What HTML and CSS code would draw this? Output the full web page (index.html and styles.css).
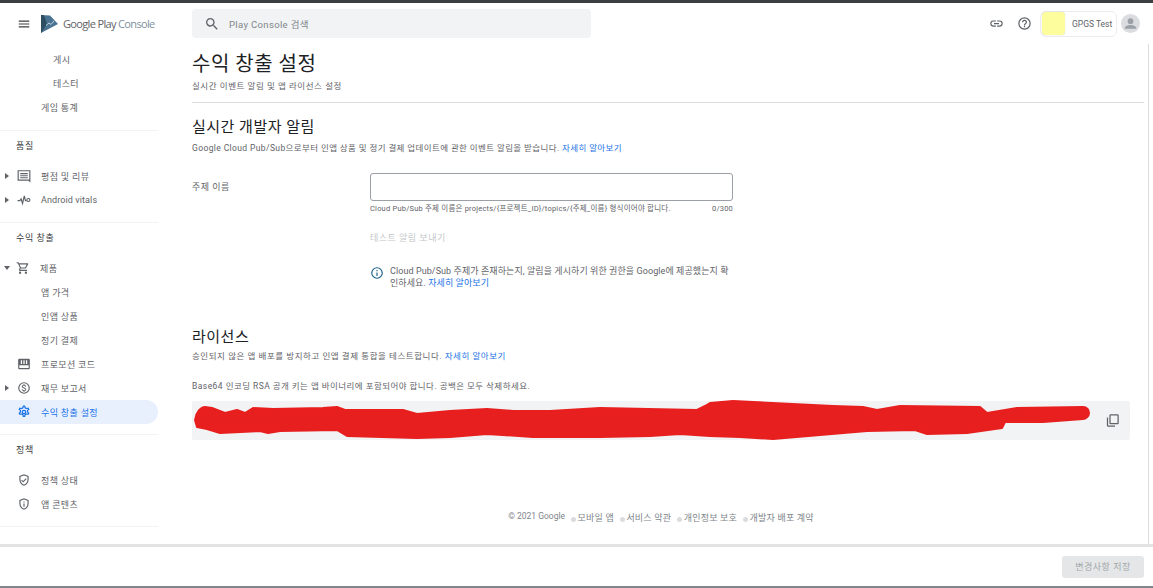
FILE: index.html
```html
<!DOCTYPE html>
<html lang="ko">
<head>
<meta charset="utf-8">
<title>수익 창출 설정</title>
<link rel="stylesheet" href="styles.css">
</head>
<body>
<div class="window">
  <aside class="sidebar">
    <div class="brand">
      <svg class="menu-icon" viewBox="0 0 24 24"><path d="M3 18h18v-2H3v2zm0-5h18v-2H3v2zm0-7v2h18V6H3z"/></svg>
      <svg class="logo" viewBox="0 0 17 18"><path d="M0 0l9 .6 8 8.400L0 18z" fill="#4a7391"/><path d="M0 0l3 .2L6 9 0 18z" fill="#2d4d63"/><path d="M5 10.500l3-2.500 2 1.500 3-3.500" fill="none" stroke="#bcd4e2" stroke-width="1"/></svg>
      <span class="brand-name">Google Play <span class="brand-light">Console</span></span>
    </div>
    <nav class="nav">
      <section class="nav-group first">
        <a class="row sub deep">게시</a>
        <a class="row sub deep">테스터</a>
        <a class="row sub">게임 통계</a>
      </section>
      <section class="nav-group">
        <h3 class="nav-title">품질</h3>
        <a class="row"><i class="caret"></i><svg class="nav-icon" viewBox="0 0 24 24"><path d="M23 2H1v18h18.500L23 23V2zm-2 16.200l-.7-.2H3V4h18v14.200zM5.500 7h13v1.800h-13zm0 3.600h13v1.800h-13zm0 3.600h13V16h-13z"/></svg>평점 및 리뷰</a>
        <a class="row latin"><i class="caret"></i><svg class="nav-icon" viewBox="0 0 24 24"><path d="M1 13h4l2-3 2.500 8 3-13 2 8h2" fill="none" stroke="currentColor" stroke-width="2"/><circle cx="19.500" cy="12" r="2.600" fill="none" stroke="currentColor" stroke-width="2"/></svg>Android vitals</a>
      </section>
      <section class="nav-group">
        <h3 class="nav-title">수익 창출</h3>
        <a class="row"><i class="caret open"></i><svg class="nav-icon" viewBox="0 0 24 24"><path d="M15.550 13c.75 0 1.410-.41 1.750-1.030l3.580-6.490A1 1 0 0 0 20.010 4H5.210l-.94-2H1v2h2l3.600 7.590-1.350 2.440C4.520 15.370 5.480 17 7 17h12v-2H7l1.100-2h7.450zM6.160 6h12.150l-2.760 5H8.530L6.160 6zM7 18a2 2 0 1 0 0 4 2 2 0 0 0 0-4zm10 0a2 2 0 1 0 0 4 2 2 0 0 0 0-4z"/></svg>제품</a>
        <a class="row sub">앱 가격</a>
        <a class="row sub">인앱 상품</a>
        <a class="row sub">정기 결제</a>
        <a class="row"><i class="caret none"></i><svg class="nav-icon" viewBox="0 0 24 24"><path d="M4 3h16a2 2 0 0 1 2 2v14a2 2 0 0 1-2 2H4a2 2 0 0 1-2-2V5a2 2 0 0 1 2-2zM4 14v5h16v-5z"/><path fill="#fff" d="M6.500 5.500h2.200V12H6.500zm4.400 0h2.200V12h-2.200zm4.400 0h2.200V12h-2.200z"/></svg>프로모션 코드</a>
        <a class="row"><i class="caret"></i><svg class="nav-icon" viewBox="0 0 24 24"><path d="M12 2a10 10 0 1 0 0 20 10 10 0 0 0 0-20zm0 18a8 8 0 1 1 0-16 8 8 0 0 1 0 16zm.3-8.900c-1.700-.44-2.300-.9-2.300-1.600 0-.8.760-1.400 2-1.400 1.300 0 1.800.63 1.850 1.550h1.650c-.05-1.260-.82-2.420-2.350-2.790V5.500h-2.200v1.340C9.500 7.140 8.300 8.060 8.300 9.520c0 1.750 1.450 2.620 3.550 3.130 1.900.45 2.250 1.110 2.250 1.810 0 .52-.37 1.350-2.050 1.350-1.560 0-2.170-.7-2.250-1.600H8.150c.09 1.660 1.330 2.590 2.800 2.900v1.390h2.200v-1.370c1.430-.27 2.560-1.090 2.560-2.590 0-2.070-1.780-2.780-3.410-3.440z"/></svg>재무 보고서</a>
        <a class="row active"><i class="caret none"></i><svg class="nav-icon" viewBox="0 0 24 24"><path fill-rule="evenodd" d="M10 1h4l.6 3a8 8 0 0 1 2 1.150l2.900-1 2 3.450-2.300 2a8 8 0 0 1 0 2.300l2.300 2-2 3.450-2.900-1a8 8 0 0 1-2 1.150l-.6 3h-4l-.6-3a8 8 0 0 1-2-1.150l-2.900 1-2-3.450 2.300-2a8 8 0 0 1 0-2.300l-2.300-2 2-3.450 2.900 1a8 8 0 0 1 2-1.150zm1.600 2l-.5 2.500a6 6 0 0 0-3.100 1.800L5.600 6.500l-.4.700 1.900 1.700a6 6 0 0 0 0 3.600l-1.900 1.700.4.700 2.400-.8a6 6 0 0 0 3.100 1.800l.5 2.500h.8l.5-2.500a6 6 0 0 0 3.100-1.800l2.400.8.4-.7-1.900-1.700a6 6 0 0 0 0-3.600l1.900-1.700-.4-.7-2.400.8a6 6 0 0 0-3.100-1.800L12.400 3zM12 8a4 4 0 1 1 0 8 4 4 0 0 1 0-8zm0 2.200a1.800 1.800 0 1 0 0 3.600 1.800 1.800 0 0 0 0-3.600z"/></svg>수익 창출 설정</a>
      </section>
      <section class="nav-group">
        <h3 class="nav-title">정책</h3>
        <a class="row"><i class="caret none"></i><svg class="nav-icon" viewBox="0 0 24 24"><path d="M12 2L4 5v6c0 5 3.400 9.700 8 11 4.600-1.300 8-6 8-11V5l-8-3zm6 9c0 4-2.600 7.700-6 8.900-3.400-1.200-6-4.900-6-8.900V6.400l6-2.300 6 2.300V11zm-9.500.500L7.100 12.900l3.400 3.400 6-6-1.400-1.400-4.600 4.600-2-2z"/></svg>정책 상태</a>
        <a class="row"><i class="caret none"></i><svg class="nav-icon" viewBox="0 0 24 24"><path d="M12 2L4 5v6c0 5 3.400 9.700 8 11 4.600-1.300 8-6 8-11V5l-8-3zm6 9c0 4-2.600 7.700-6 8.900-3.400-1.200-6-4.900-6-8.900V6.400l6-2.300 6 2.300V11zM11 7.500h2v2h-2zm0 3.500h2v5.500h-2z"/></svg>앱 콘텐츠</a>
      </section>
    </nav>
  </aside>

  <div class="content">
    <header class="topbar">
      <div class="search">
        <svg class="search-icon" viewBox="0 0 24 24"><path d="M15.500 14h-.79l-.28-.27A6.470 6.470 0 0 0 16 9.500 6.500 6.500 0 1 0 9.500 16c1.610 0 3.090-.59 4.230-1.570l.27.28v.79l5 4.990L20.490 19l-4.990-5zm-6 0C7.010 14 5 11.990 5 9.500S7.010 5 9.500 5 14 7.010 14 9.500 11.990 14 9.500 14z"/></svg>
        <span>Play Console 검색</span>
      </div>
      <div class="top-actions">
        <svg class="top-icon" viewBox="0 0 24 24"><path d="M3.900 12c0-1.710 1.390-3.100 3.100-3.100h4V7H7a5 5 0 0 0 0 10h4v-1.900H7c-1.710 0-3.100-1.390-3.100-3.100zM8 13h8v-2H8v2zm9-6h-4v1.900h4c1.710 0 3.100 1.390 3.100 3.100s-1.390 3.100-3.100 3.100h-4V17h4a5 5 0 0 0 0-10z"/></svg>
        <svg class="top-icon" viewBox="0 0 24 24"><path d="M11 18h2v-2h-2v2zm1-16a10 10 0 1 0 0 20 10 10 0 0 0 0-20zm0 18a8 8 0 1 1 0-16 8 8 0 0 1 0 16zm0-14a4 4 0 0 0-4 4h2c0-1.100.9-2 2-2s2 .9 2 2c0 2-3 1.750-3 5h2c0-2.250 3-2.500 3-5a4 4 0 0 0-4-4z"/></svg>
        <div class="account"><span class="swatch"></span><span>GPGS Test</span></div>
        <svg class="avatar" viewBox="0 0 20 20"><circle cx="10" cy="10" r="10" fill="#dadce0"/><circle cx="10" cy="7.500" r="3" fill="#9aa0a6"/><path d="M4 15c0-2.500 3.500-3.500 6-3.500s6 1 6 3.500v.500H4z" fill="#9aa0a6"/></svg>
      </div>
    </header>

    <main class="main">
      <div class="page-head">
        <h1>수익 창출 설정</h1>
        <p class="muted">실시간 이벤트 알림 및 앱 라이선스 설정</p>
      </div>

      <section class="block rtdn">
        <h2>실시간 개발자 알림</h2>
        <p class="muted">Google Cloud Pub/Sub으로부터 인앱 상품 및 정기 결제 업데이트에 관한 이벤트 알림을 받습니다. <a class="link">자세히 알아보기</a></p>
        <div class="field">
          <label>주제 이름</label>
          <div class="field-body">
            <div class="input"></div>
            <div class="hint"><span>Cloud Pub/Sub 주제 이름은 projects/{프로젝트_ID}/topics/{주제_이름} 형식이어야 합니다.</span><span>0/300</span></div>
            <div class="test-btn">테스트 알림 보내기</div>
            <div class="notice">
              <svg class="info" viewBox="0 0 24 24"><path d="M11 7h2v2h-2zm0 4h2v6h-2zm1-9a10 10 0 1 0 0 20 10 10 0 0 0 0-20zm0 18a8 8 0 1 1 0-16 8 8 0 0 1 0 16z"/></svg>
              <p>Cloud Pub/Sub 주제가 존재하는지, 알림을 게시하기 위한 권한을 Google에 제공했는지 확인하세요. <a class="link">자세히 알아보기</a></p>
            </div>
          </div>
        </div>
      </section>

      <section class="block license">
        <h2>라이선스</h2>
        <p class="muted">승인되지 않은 앱 배포를 방지하고 인앱 결제 통합을 테스트합니다. <a class="link">자세히 알아보기</a></p>
        <p class="muted key-label">Base64 인코딩 RSA 공개 키는 앱 바이너리에 포함되어야 합니다. 공백은 모두 삭제하세요.</p>
        <div class="key-box">
          <svg class="scribble" viewBox="192 398 900 44"><path fill="#e81f1f" stroke="#e81f1f" stroke-width="2" stroke-linejoin="round" d="M195 420C196 412 201 407 205 407L212 408 225 413 237 410 245 413 253 408 273 409 323 408 337 407 345 410 403 410 417 414 450 411 487 409 513 411 550 411 600 408 697 410 705 406 710 403 733 401 833 406 863 407 877 410 900 406 980 407 987 413 1017 408 1083 407C1087 407 1089 410 1089 413 1089 416 1086 419 1083 419L1043 422 1005 422 1002 428 967 433 927 434 915 430 867 431 773 439 740 437 710 436 680 434 650 436 600 437 533 437 487 434 450 437 417 438 347 436 337 430 280 431 268 433 260 431 220 433 207 429 197 427Z"/></svg>
          <svg class="copy" viewBox="0 0 24 24"><path d="M9 2h11a2 2 0 0 1 2 2v12a2 2 0 0 1-2 2H9a2 2 0 0 1-2-2V4a2 2 0 0 1 2-2zm0 2v12h11V4H9zM3 7h2v13h11v2H5a2 2 0 0 1-2-2V7z"/></svg>
        </div>
      </section>

      <footer class="foot">
        <span class="copyright">© 2021 Google</span>
        <span class="dot">모바일 앱</span>
        <span class="dot">서비스 약관</span>
        <span class="dot">개인정보 보호</span>
        <span class="dot">개발자 배포 계약</span>
      </footer>
    </main>
  </div>
</div>
<div class="savebar"><div class="save">변경사항 저장</div></div>
</body>
</html>
```
FILE: styles.css
```css
* { box-sizing: border-box; }
html, body { height: 100%; }
body {
  margin: 0;
  height: 588px;
  overflow: hidden;
  display: flex;
  flex-direction: column;
  background: #fff;
  border-top: 3px solid #3c3f41;
  border-bottom: 2px solid #80868b;
  font-family: Roboto, "Noto Sans CJK KR", sans-serif;
  color: #5f6368;
  font-size: 9px;
}
h1, h2, h3, p { margin: 0; font-weight: 400; }
a { color: inherit; text-decoration: none; }
.window { flex: 1; display: flex; min-height: 0; }

.sidebar { width: 192px; flex: none; }
.brand { display: flex; align-items: center; height: 41px; padding-left: 17px; }
.menu-icon { width: 14px; height: 14px; fill: #3c4043; margin-right: 10px; }
.logo { width: 17px; height: 18px; margin-right: 5px; }
.brand-name { font-size: 11px; font-weight: 500; color: #5f6368; font-family: "Open Sans", sans-serif; letter-spacing: -.65px; white-space: nowrap; }
.brand-light { color: #80909c; font-weight: 400; }

.nav { width: 158px; }
.nav-group { border-bottom: 1px solid #f1f3f4; padding: 3px 0 10px; }
.nav-group.first { padding: 3px 0 11px; }
.nav-title { font-size: 9px; color: #3c4043; letter-spacing: .6px; height: 26px; line-height: 24px; padding-left: 16px; margin-bottom: 4px; }
.row { display: flex; align-items: center; height: 24px; letter-spacing: .35px; color: #5f6368; white-space: nowrap; padding-right: 8px; }
.row.latin { letter-spacing: .1px; }
.row.sub { padding-left: 41px; }
.row.deep { padding-left: 53px; }
.row.active { background: #e8f0fe; color: #1a73e8; border-radius: 0 12px 12px 0; }
.caret { width: 0; height: 0; margin-left: 5px; margin-right: 8px; border-left: 4px solid #5f6368; border-top: 3px solid transparent; border-bottom: 3px solid transparent; flex: none; }
.caret.open { margin-left: 4px; margin-right: 6px; border-top: 4px solid #5f6368; border-left: 3.500px solid transparent; border-right: 3.500px solid transparent; border-bottom: 0; }
.caret.none { border-color: transparent; }
.nav-icon { width: 14px; height: 14px; margin-right: 10px; fill: #5f6368; color: #5f6368; flex: none; }
.active .nav-icon { fill: #1a73e8; }

.content { flex: 1; min-width: 0; display: flex; flex-direction: column; }
.topbar { display: flex; align-items: center; justify-content: space-between; height: 41px; flex: none; padding-right: 13px; }
.search { width: 399px; height: 29px; background: #f1f3f4; border-radius: 4px; display: flex; align-items: center; padding-left: 12px; font-size: 9.500px; color: #80868b; letter-spacing: .35px; }
.search-icon { width: 16px; height: 16px; fill: #5f6368; margin-right: 9px; }
.top-actions { display: flex; align-items: center; }
.top-icon { width: 15px; height: 15px; fill: #5f6368; margin-right: 13px; }
.top-icon:nth-child(2) { margin-right: 8px; }
.account { width: 77px; height: 26px; border: 1px solid #ececec; border-radius: 6px; display: flex; align-items: center; gap: 7px; padding-left: 1px; font-size: 8.500px; color: #5f6368; }
.swatch { width: 23px; height: 23px; background: #fdfd9e; border-radius: 4px; box-shadow: 0 0 1px #bbb; }
.avatar { width: 19px; height: 19px; margin-left: 4px; }

.main { margin-right: 4px; padding-right: 4px; border-right: 1px solid #dcdcdc; flex: 1; min-height: 0; display: flex; flex-direction: column; }
.page-head { height: 59px; border-bottom: 1px solid #dadce0; padding-top: 8px; flex: none; }
h1 { font-size: 20px; color: #202124; line-height: 25px; letter-spacing: .5px; }
.muted { font-size: 8.500px; color: #5f6368; letter-spacing: .45px; line-height: 13px; }
.page-head .muted { margin-top: 3px; letter-spacing: .55px; }
h2 { font-size: 15px; color: #202124; line-height: 20px; letter-spacing: .5px; }
.link { color: #1a73e8; }
.rtdn { padding-top: 14px; }
.rtdn > .muted { margin-top: 5px; letter-spacing: .39px; }
.field { display: flex; margin-top: 18px; }
.field label { width: 178px; flex: none; padding-top: 7px; font-size: 9px; letter-spacing: .5px; }
.field-body { width: 363px; }
.input { height: 28px; border: 1px solid #9aa0a6; border-radius: 3px; }
.hint { display: flex; justify-content: space-between; font-size: 7.500px; letter-spacing: .21px; line-height: 13px; margin-top: 1px; }
.test-btn { margin-top: 17px; font-size: 9px; letter-spacing: .5px; color: #c4c7ca; line-height: 13px; }
.notice { display: flex; margin-top: 20px; font-size: 9px; letter-spacing: .08px; line-height: 12px; }
.notice p { flex: 1; }
.info { width: 14px; height: 14px; fill: #1a5f8a; flex: none; margin-right: 6px; margin-top: 1px; }
.license { padding-top: 38px; }
.license > .muted { margin-top: 3px; letter-spacing: .55px; }
.license > .key-label { margin-top: 17px; letter-spacing: .45px; }
.key-box { position: relative; width: 938px; height: 39px; margin-top: 8px; background: #f1f3f4; border-radius: 2px; display: flex; align-items: center; justify-content: flex-end; padding-right: 10px; }
.scribble { position: absolute; left: 0; top: -3px; width: 900px; height: 44px; }
.copy { width: 15px; height: 15px; fill: #5f6368; }
.foot { display: flex; justify-content: center; gap: 6px; margin-top: 71px; padding-right: 14px; font-size: 9px; letter-spacing: .2px; color: #80868b; }
.copyright { font-size: 8.500px; letter-spacing: 0; }
.dot { display: flex; align-items: center; }
.dot::before { content: ""; width: 5px; height: 5px; margin: 4px 1.500px 0 0; border-radius: 50%; background: #dadce0; }

.savebar { height: 42px; flex: none; border-top: 3px solid #e3e3e3; display: flex; align-items: center; justify-content: flex-end; padding: 0 9px 0 0; }
.save { width: 82px; height: 22px; background: #e4e6e7; border-radius: 3px; color: #a3a7ab; font-size: 9px; letter-spacing: .5px; display: flex; align-items: center; justify-content: center; }
```
